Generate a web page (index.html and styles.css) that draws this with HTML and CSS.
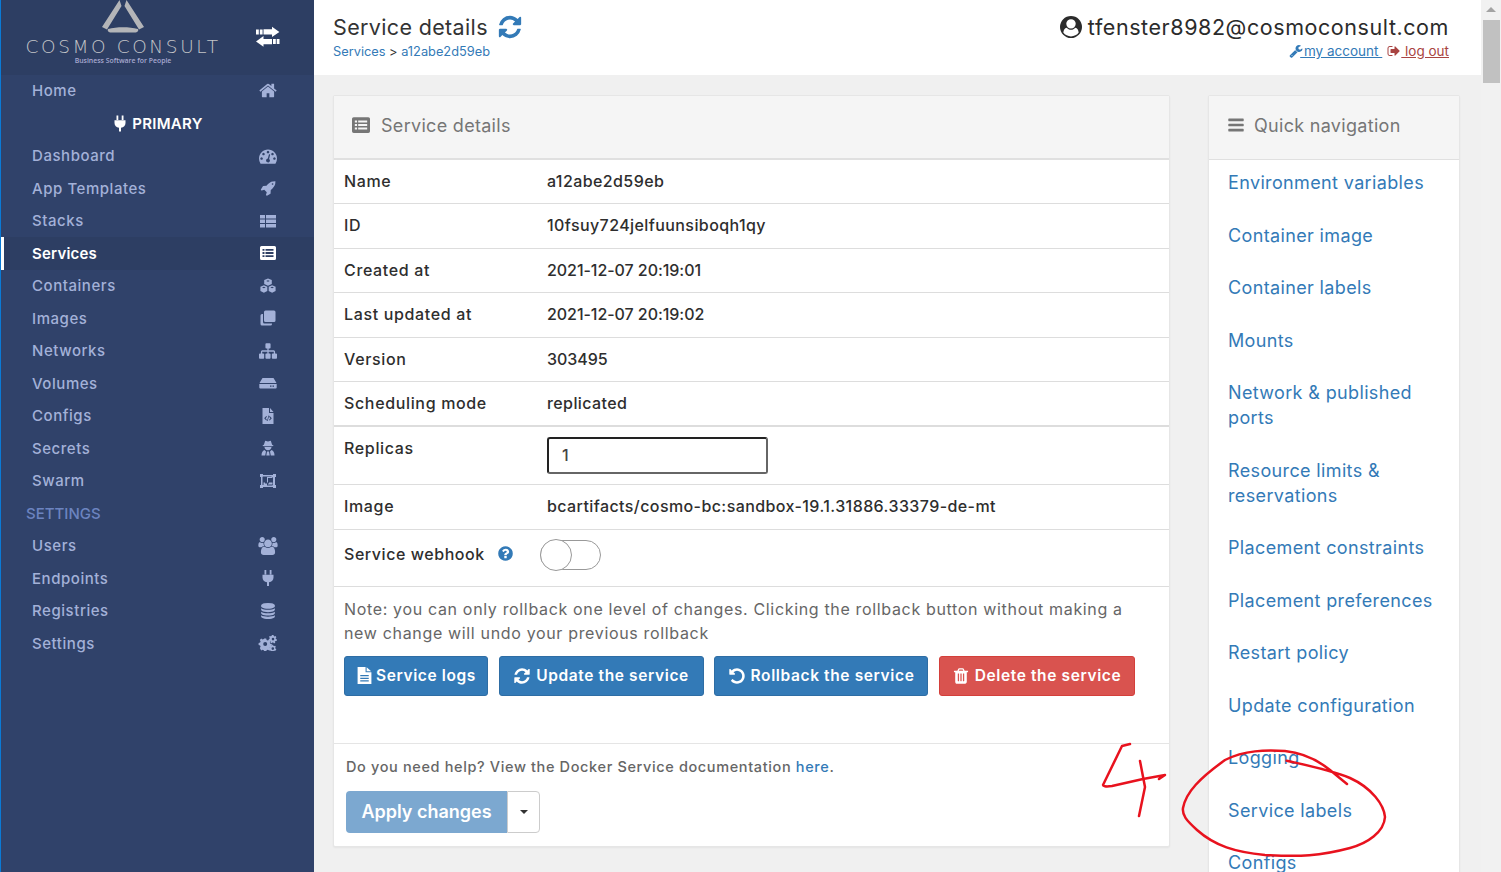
FILE: index.html
```html
<!DOCTYPE html>
<html lang="en">
<head>
<meta charset="utf-8">
<title>Service details</title>
<link rel="stylesheet" href="styles.css">
</head>
<body>
<svg class="sprite" xmlns="http://www.w3.org/2000/svg">
<symbol id="i-refresh" viewBox="0 0 1792 1792"><path d="M1639 1056q0 5-1 7-64 268-268 434.5t-478 166.5q-146 0-282.5-55t-243.5-157l-129 129q-19 19-45 19t-45-19-19-45v-448q0-26 19-45t45-19h448q26 0 45 19t19 45-19 45l-137 137q71 66 161 102t187 36q134 0 250-65t186-179q11-17 53-117 8-23 30-23h192q13 0 22.5 9.5t9.5 22.5zm25-800v448q0 26-19 45t-45 19h-448q-26 0-45-19t-19-45 19-45l138-138q-148-137-349-137-134 0-250 65t-186 179q-11 17-53 117-8 23-30 23h-199q-13 0-22.5-9.5t-9.5-22.5v-7q65-268 270-434.5t480-166.5q146 0 284 55.5t245 156.5l130-129q19-19 45-19t45 19 19 45z"/></symbol>
<symbol id="i-home" viewBox="0 0 1792 1792"><path d="M1472 992v480q0 26-19 45t-45 19h-384v-384h-256v384h-384q-26 0-45-19t-19-45v-480q0-1 .5-3t.5-3l575-474 575 474q1 2 1 6zm223-69l-62 74q-8 9-21 11h-3q-13 0-21-7l-692-577-692 577q-12 8-24 7-13-2-21-11l-62-74q-8-10-7-23.5t11-21.5l719-599q32-26 76-26t76 26l244 204v-195q0-14 9-23t23-9h192q14 0 23 9t9 23v408l219 182q10 8 11 21.5t-7 23.5z"/></symbol>
<symbol id="i-wrench" viewBox="0 0 1792 1792"><path d="M448 1472q0-26-19-45t-45-19-45 19-19 45 19 45 45 19 45-19 19-45zm644-420l-682 682q-37 37-90 37-52 0-91-37l-106-108q-38-36-38-90 0-53 38-91l681-681q39 98 114.5 173.5t173.5 114.5zm634-435q0 39-23 106-47 134-164.5 217.5t-258.5 83.5q-185 0-316.5-131.5t-131.5-316.5 131.5-316.5 316.5-131.5q58 0 121.5 16.5t107.5 46.5q16 11 16 28t-16 28l-293 169v224l193 107q5-3 79-48.5t135.5-81 70.5-35.5q15 0 23.5 10t8.5 25z"/></symbol>
<symbol id="i-signout" viewBox="0 0 1792 1792"><path d="M704 1440q0 4 1 20t.5 26.5-3 23.5-10 19.5-20.5 6.5h-320q-119 0-203.5-84.5t-84.5-203.5v-704q0-119 84.5-203.5t203.5-84.5h320q13 0 22.5 9.5t9.5 22.5q0 4 1 20t.5 26.5-3 23.5-10 19.5-20.5 6.5h-320q-66 0-113 47t-47 113v704q0 66 47 113t113 47h312l11.5 1 11.5 3 8 5.5 7 9 2 13.5zm928-544q0 26-19 45l-544 544q-19 19-45 19t-45-19-19-45v-288h-448q-26 0-45-19t-19-45v-384q0-26 19-45t45-19h448v-288q0-26 19-45t45-19 45 19l544 544q19 19 19 45z"/></symbol>
<symbol id="i-question" viewBox="0 0 1792 1792"><path d="M1024 1376v-192q0-14-9-23t-23-9h-192q-14 0-23 9t-9 23v192q0 14 9 23t23 9h192q14 0 23-9t9-23zm256-672q0-88-55.5-163t-138.5-116-170-41q-243 0-371 213-15 24 8 42l132 100q7 6 19 6 16 0 25-12 53-68 86-92 34-24 86-24 48 0 85.5 26t37.5 59q0 38-20 61t-68 45q-63 28-115.5 86.5t-52.5 125.5v36q0 14 9 23t23 9h192q14 0 23-9t9-23q0-19 21.5-49.5t54.5-49.5q32-18 49-28.5t46-35 44.5-48 28-60.5 12.5-81zm384 192q0 209-103 385.5t-279.5 279.5-385.5 103-385.5-103-279.5-279.5-103-385.5 103-385.5 279.5-279.5 385.5-103 385.5 103 279.5 279.5 103 385.5z"/></symbol>
<symbol id="i-bars" viewBox="0 0 1792 1792"><path d="M1664 1344v128q0 26-19 45t-45 19h-1408q-26 0-45-19t-19-45v-128q0-26 19-45t45-19h1408q26 0 45 19t19 45zm0-512v128q0 26-19 45t-45 19h-1408q-26 0-45-19t-19-45v-128q0-26 19-45t45-19h1408q26 0 45 19t19 45zm0-512v128q0 26-19 45t-45 19h-1408q-26 0-45-19t-19-45v-128q0-26 19-45t45-19h1408q26 0 45 19t19 45z"/></symbol>
<symbol id="i-undo" viewBox="0 0 1792 1792"><path d="M1664 896q0 156-61 298t-164 245-245 164-298 61q-172 0-327-72.5t-264-204.5q-7-10-6.5-22.5t8.5-20.5l137-138q10-9 25-9 16 2 23 12 73 95 179 147t225 52q104 0 198.5-40.5t163.5-109.5 109.5-163.5 40.5-198.5-40.5-198.5-109.5-163.5-163.5-109.5-198.5-40.5q-98 0-188 35.5t-160 101.5l137 138q31 30 14 69-17 40-59 40h-448q-26 0-45-19t-19-45v-448q0-42 40-59 39-17 69 14l130 129q107-101 244.5-156.5t284.5-55.5q156 0 298 61t245 164 164 245 61 298z"/></symbol>
<symbol id="i-trash" viewBox="0 0 1792 1792"><path d="M704 1376v-704q0-14-9-23t-23-9h-64q-14 0-23 9t-9 23v704q0 14 9 23t23 9h64q14 0 23-9t9-23zm256 0v-704q0-14-9-23t-23-9h-64q-14 0-23 9t-9 23v704q0 14 9 23t23 9h64q14 0 23-9t9-23zm256 0v-704q0-14-9-23t-23-9h-64q-14 0-23 9t-9 23v704q0 14 9 23t23 9h64q14 0 23-9t9-23zm-544-992h448l-48-117q-7-9-17-11h-317q-10 2-17 11zm928 32v64q0 14-9 23t-23 9h-96v948q0 83-47 143.5t-113 60.5h-832q-66 0-113-58.5t-47-141.5v-952h-96q-14 0-23-9t-9-23v-64q0-14 9-23t23-9h309l70-167q15-37 54-63t79-26h320q40 0 79 26t54 63l70 167h309q14 0 23 9t9 23z"/></symbol>
<symbol id="i-database" viewBox="0 0 1792 1792"><path d="M896 768q237 0 443-43t325-127v170q0 69-103 128t-280 93.5-385 34.5-385-34.5-280-93.5-103-128v-170q119 84 325 127t443 43zm0 768q237 0 443-43t325-127v170q0 69-103 128t-280 93.5-385 34.5-385-34.5-280-93.5-103-128v-170q119 84 325 127t443 43zm0-384q237 0 443-43t325-127v170q0 69-103 128t-280 93.5-385 34.5-385-34.5-280-93.5-103-128v-170q119 84 325 127t443 43zm0-1152q208 0 385 34.5t280 93.5 103 128v128q0 69-103 128t-280 93.5-385 34.5-385-34.5-280-93.5-103-128v-128q0-69 103-128t280-93.5 385-34.5z"/></symbol>
<symbol id="i-sitemap" viewBox="0 0 1792 1792"><path d="M1792 1248v320q0 40-28 68t-68 28h-320q-40 0-68-28t-28-68v-320q0-40 28-68t68-28h96v-192h-512v192h96q40 0 68 28t28 68v320q0 40-28 68t-68 28h-320q-40 0-68-28t-28-68v-320q0-40 28-68t68-28h96v-192h-512v192h96q40 0 68 28t28 68v320q0 40-28 68t-68 28h-320q-40 0-68-28t-28-68v-320q0-40 28-68t68-28h96v-192q0-52 38-90t90-38h512v-192h-96q-40 0-68-28t-28-68v-320q0-40 28-68t68-28h320q40 0 68 28t28 68v320q0 40-28 68t-68 28h-96v192h512q52 0 90 38t38 90v192h96q40 0 68 28t28 68z"/></symbol>
<symbol id="i-rocket" viewBox="0 0 1792 1792"><path d="M1504 448q0-40-28-68t-68-28-68 28-28 68 28 68 68 28 68-28 28-68zm224-288q0 249-75.5 430.5t-253.5 360.5q-81 80-195 176l-20 379q-2 16-16 26l-384 224q-7 4-16 4-12 0-23-9l-64-64q-13-14-8-32l85-276-281-281-276 85q-3 1-9 1-14 0-23-9l-64-64q-17-19-5-39l224-384q10-14 26-16l379-20q96-114 176-195 188-187 358-258t431-71q14 0 24 9.5t10 22.5z"/></symbol>
<symbol id="i-user" viewBox="0 0 1792 1792"><path d="M1523 1339q-22-155-87.5-257.5t-184.5-118.5q-67 74-159.5 115.5t-195.5 41.5-195.5-41.5-159.5-115.5q-119 16-184.5 118.5t-87.5 257.5q106 150 271 237.5t356 87.5 356-87.5 271-237.5zm-243-699q0-159-112.5-271.5t-271.5-112.5-271.5 112.5-112.5 271.5 112.5 271.5 271.5 112.5 271.5-112.5 112.5-271.5zm512 256q0 182-71 347.5t-190.5 286-285.5 191.5-349 71q-182 0-348-71t-286-191-191-286-71-348 71-348 191-286 286-191 348-71 348 71 286 191 191 286 71 348z"/></symbol>
<symbol id="i-users" viewBox="0 0 1920 1792"><path d="M593 896q-162 5-265 128h-134q-82 0-138-40.5t-56-118.5q0-353 124-353 6 0 43.5 21t97.5 42.5 119 21.5q67 0 133-23-5 37-5 66 0 139 81 256zm1071 637q0 120-73 189.5t-194 69.5h-874q-121 0-194-69.5t-73-189.5q0-53 3.5-103.5t14-109 26.5-108.5 43-97.5 62-81 85.5-53.5 111.5-20q10 0 43 21.5t73 48 107 48 135 21.5 135-21.5 107-48 73-48 43-21.5q61 0 111.5 20t85.5 53.5 62 81 43 97.5 26.5 108.5 14 109 3.5 103.5zm-1024-1277q0 106-75 181t-181 75-181-75-75-181 75-181 181-75 181 75 75 181zm704 384q0 159-112.5 271.5t-271.5 112.5-271.5-112.5-112.5-271.5 112.5-271.5 271.5-112.5 271.5 112.5 112.5 271.5zm576 225q0 78-56 118.5t-138 40.5h-134q-103-123-265-128 81-117 81-256 0-29-5-66 66 23 133 23 59 0 119-21.5t97.5-42.5 43.5-21q124 0 124 353zm-128-609q0 106-75 181t-181 75-181-75-75-181 75-181 181-75 181 75 75 181z"/></symbol>
<symbol id="i-gauge" viewBox="0 0 1792 1792"><path d="M384 1152q0-53-37.5-90.5t-90.5-37.5-90.5 37.5-37.5 90.5 37.5 90.5 90.5 37.5 90.5-37.5 37.5-90.5zm192-448q0-53-37.5-90.5t-90.5-37.5-90.5 37.5-37.5 90.5 37.5 90.5 90.5 37.5 90.5-37.5 37.5-90.5zm428 481l101-382q6-26-7.5-48.5t-38.5-29.5-48 6.5-30 39.5l-101 382q-60 5-107 43.5t-63 98.5q-20 77 20 146t117 89 146-20 89-117q16-60-6-117t-72-91zm660-33q0-53-37.5-90.5t-90.5-37.5-90.5 37.5-37.5 90.5 37.5 90.5 90.5 37.5 90.5-37.5 37.5-90.5zm-640-640q0-53-37.5-90.5t-90.5-37.5-90.5 37.5-37.5 90.5 37.5 90.5 90.5 37.5 90.5-37.5 37.5-90.5zm448 192q0-53-37.5-90.5t-90.5-37.5-90.5 37.5-37.5 90.5 37.5 90.5 90.5 37.5 90.5-37.5 37.5-90.5zm320 448q0 261-141 483-19 29-54 29h-1402q-35 0-54-29-141-221-141-483 0-182 71-348t191-286 286-191 348-71 348 71 286 191 191 286 71 348z"/></symbol>
<symbol id="i-exchange" viewBox="0 0 24 21"><path d="M16 0.700L23.400 6 16 11V8.500H7.500V3.300H16zM0 3.500h2.800v5H0zM3.800 3.500h2.800v5H3.800zM7.500 10L0 15.400 7.500 20.800V18.200H16V13H7.500zM17 13h2.800v5H17zM20.700 13h2.800v5h-2.800z"/></symbol>
<symbol id="i-thlist" viewBox="0 0 16 16"><path d="M0 2h5v3.500H0zM6 2h10v3.500H6zM0 6.500h5V10H0zM6 6.500h10V10H6zM0 11h5v3.500H0zM6 11h10v3.500H6z"/></symbol>
<symbol id="i-listalt" viewBox="0 0 16 16"><path fill-rule="evenodd" d="M1.500 1h13A1.500 1.500 0 0 1 16 2.500v11a1.500 1.500 0 0 1-1.500 1.500h-13A1.500 1.500 0 0 1 0 13.500v-11A1.500 1.500 0 0 1 1.500 1zM2.500 4v1.800h2V4zM5.500 4v1.800h8V4zM2.500 7.100v1.800h2V7.100zM5.500 7.100v1.800h8V7.100zM2.500 10.200V12h2v-1.800zM5.500 10.200V12h8v-1.800z"/></symbol>
<symbol id="i-plug" viewBox="0 0 16 16"><path d="M4.500 0h1.800v4.500H4.500zM9.700 0h1.800v4.500H9.700zM2.500 4.800h11v2.600c0 2.600-1.800 4.400-4.500 4.800V16H7v-3.800C4.300 11.800 2.500 10 2.500 7.400z"/></symbol>
<symbol id="i-cubes" viewBox="0 0 16 16"><path fill-rule="evenodd" d="M8 .5l3.800 1.600v4L8 7.700 4.200 6.100v-4zM6.200 3l1.800.8 1.800-.8L8 2.200zM3.900 7.300l3.400 1.500v4.100l-3.400 1.800L.4 13v-4.200zM2 9.500l1.900.8 1.800-.8-1.800-.7zM12.100 7.300l3.500 1.500V13l-3.500 1.700-3.400-1.800V8.800zM10.300 9.500l1.800.8 1.900-.8-1.900-.7z"/></symbol>
<symbol id="i-clone" viewBox="0 0 16 16"><path d="M5.500 0.500h8.500a1.500 1.500 0 0 1 1.500 1.500v8.500a1.500 1.500 0 0 1-1.500 1.500H5.500A1.500 1.500 0 0 1 4 10.500V2a1.500 1.500 0 0 1 1.500-1.500z"/><path d="M3 4v8a1.500 1.500 0 0 0 1.500 1.500H12V14a1.500 1.500 0 0 1-1.500 1.500H2A1.500 1.500 0 0 1 .5 14V5.500A1.500 1.500 0 0 1 2 4z"/></symbol>
<symbol id="i-hdd" viewBox="0 0 18 14"><path fill-rule="evenodd" d="M3.500 2h11l3 5H.5zM.3 8h17.400v3.500a1 1 0 0 1-1 1H1.300a1 1 0 0 1-1-1zM11 9.500v1.300h1.500V9.500zM13.500 9.500v1.300H15V9.500z"/></symbol>
<symbol id="i-filecode" viewBox="0 0 16 16"><path fill-rule="evenodd" d="M2.500 0H9v5h4.500v11h-11zM10 0l3.500 4H10zM6.300 8L4.200 10.300l2.100 2.300.7-.7-1.400-1.600L7 8.700zM9.700 8L9 8.700l1.400 1.600L9 11.900l.7.7 2.100-2.300zM8.500 7.500L7 13h.7l1.500-5.500z"/></symbol>
<symbol id="i-secret" viewBox="0 0 16 16"><path fill-rule="evenodd" d="M5.200.8L8 1.600 10.800.8l1.300 4 1.600.8-1.500.7H3.800L2.300 5.600l1.600-.8zM4.500 7h7c0 1.800-1.500 3.300-3.500 3.300S4.500 8.800 4.500 7zM1.500 15.500c0-3 1-4.800 3-5.500l1.500 1.500-.8 4zM14.500 15.500c0-3-1-4.800-3-5.500L10 11.500l.8 4zM7 11.500h2l.7 4H6.300z"/></symbol>
<symbol id="i-ungroup" viewBox="0 0 16 16"><path fill-rule="evenodd" d="M0 1h3v1h10V1h3v3h-1v8h1v3h-3v-1H3v1H0v-3h1V4H0zM3 3.500L2.500 4v8h1V9.500H7V4h4.500v-.5zM8 5v4.500H5v1h2v2h5.500V12H13V4h-.5v1zM9 10.500v-1h3.500v2H8v-1z"/></symbol>
<symbol id="i-cogs" viewBox="0 0 18 16"><path fill-rule="evenodd" d="M5.200 3.500h2l.4 1.500 1.200.5 1.400-.8 1.400 1.400-.8 1.400.5 1.200 1.500.4v2l-1.500.4-.5 1.200.8 1.400-1.400 1.400-1.400-.8-1.200.5-.4 1.500h-2l-.4-1.500-1.200-.5-1.400.8L.8 13.100l.8-1.400-.5-1.200L-.4 10V8l1.500-.4.500-1.200-.8-1.400 1.400-1.400 1.400.8 1.200-.5zM6.200 7a2 2 0 1 0 0 4 2 2 0 0 0 0-4z"/><path fill-rule="evenodd" d="M14.500 0l.3 1 .9.4.9-.4.8 1.200-.7.7.1 1L18 4.500 17.600 6l-1.100-.1-.6.8.4 1-1.300.7-.7-.8-1-.1-.7.8-1.300-.7.4-1-.6-.8-1.100.1-.4-1.500 1-.6.1-1-.7-.7.8-1.200.9.4.9-.4.3-1zM14 2.800a1.300 1.300 0 1 0 0 2.600 1.300 1.300 0 0 0 0-2.600z"/><path fill-rule="evenodd" d="M14 9.800l.3 1 .9.3.9-.4.8 1.200-.7.7.1 1 1 .5-.4 1.500-1.100-.1-.6.8.1.6H12l.1-.6-.6-.8-1.100.1-.4-1.500 1-.5.1-1-.7-.7.8-1.200.9.4.9-.3.3-1zM13.800 12.300a1.300 1.300 0 1 0 0 2.600 1.300 1.300 0 0 0 0-2.600z"/></symbol>
<symbol id="i-filetext" viewBox="0 0 16 16"><path fill-rule="evenodd" d="M1.500 0H9v5h5.500v11h-13zM4 7.500v1.200h8V7.500zM4 10v1.200h8V10zM4 12.500v1.200h8v-1.200zM10 .2L14.300 4H10z"/></symbol>
</svg>

<div class="app">
  <aside class="sidebar">
    <div class="brand">
      <div class="logo">
        <svg class="logo-mark" viewBox="0 0 44 34"><path d="M18.500 0L1 27l5 2.500L20.500 6zM25.500 0L43 27l-5 2.500L23.500 6zM7 29c9-2.500 21-2.500 30 0 1 2-1 3.500-3 3.500H10c-2 0-4-1.500-3-3.500z"/></svg>
        <div class="logo-name">COSMO CONSULT</div>
        <div class="logo-tag">Business Software for People</div>
      </div>
      <svg class="swap"><use href="#i-exchange"/></svg>
    </div>
    <nav class="nav">
      <a class="nav-item"><span>Home</span><svg class="nav-ic xl"><use href="#i-home"/></svg></a>
      <div class="nav-endpoint"><svg class="ep-ic"><use href="#i-plug"/></svg>PRIMARY</div>
      <a class="nav-item"><span>Dashboard</span><svg class="nav-ic lg"><use href="#i-gauge"/></svg></a>
      <a class="nav-item"><span>App Templates</span><svg class="nav-ic"><use href="#i-rocket"/></svg></a>
      <a class="nav-item"><span>Stacks</span><svg class="nav-ic"><use href="#i-thlist"/></svg></a>
      <a class="nav-item active"><span>Services</span><svg class="nav-ic"><use href="#i-listalt"/></svg></a>
      <a class="nav-item"><span>Containers</span><svg class="nav-ic"><use href="#i-cubes"/></svg></a>
      <a class="nav-item"><span>Images</span><svg class="nav-ic"><use href="#i-clone"/></svg></a>
      <a class="nav-item"><span>Networks</span><svg class="nav-ic lg"><use href="#i-sitemap"/></svg></a>
      <a class="nav-item"><span>Volumes</span><svg class="nav-ic sm"><use href="#i-hdd"/></svg></a>
      <a class="nav-item"><span>Configs</span><svg class="nav-ic"><use href="#i-filecode"/></svg></a>
      <a class="nav-item"><span>Secrets</span><svg class="nav-ic"><use href="#i-secret"/></svg></a>
      <a class="nav-item"><span>Swarm</span><svg class="nav-ic"><use href="#i-ungroup"/></svg></a>
      <div class="nav-title">SETTINGS</div>
      <a class="nav-item"><span>Users</span><svg class="nav-ic lg"><use href="#i-users"/></svg></a>
      <a class="nav-item"><span>Endpoints</span><svg class="nav-ic"><use href="#i-plug"/></svg></a>
      <a class="nav-item"><span>Registries</span><svg class="nav-ic"><use href="#i-database"/></svg></a>
      <a class="nav-item"><span>Settings</span><svg class="nav-ic"><use href="#i-cogs"/></svg></a>
    </nav>
  </aside>

  <main class="main">
    <header class="topbar">
      <div>
        <div class="page-title">Service details <svg class="title-refresh"><use href="#i-refresh"/></svg></div>
        <div class="crumbs"><a>Services</a> &gt; <a>a12abe2d59eb</a></div>
      </div>
      <div class="account">
        <div class="account-name"><svg class="account-ic"><use href="#i-user"/></svg>tfenster8982@cosmoconsult.com</div>
        <div class="account-links">
          <svg class="link-ic blue"><use href="#i-wrench"/></svg><a class="lnk">&nbsp;my account&nbsp;</a>
          <svg class="link-ic red gap"><use href="#i-signout"/></svg><a class="lnk out">&nbsp;log out</a>
        </div>
      </div>
    </header>

    <div class="content">
      <section class="panel details">
        <div class="panel-head"><svg class="head-ic"><use href="#i-listalt"/></svg>Service details</div>
        <div class="row"><div class="lab">Name</div><div>a12abe2d59eb</div></div>
        <div class="row"><div class="lab">ID</div><div>10fsuy724jelfuunsiboqh1qy</div></div>
        <div class="row"><div class="lab">Created at</div><div class="num">2021-12-07 20:19:01</div></div>
        <div class="row"><div class="lab">Last updated at</div><div class="num">2021-12-07 20:19:02</div></div>
        <div class="row"><div class="lab">Version</div><div class="num">303495</div></div>
        <div class="row strong"><div class="lab">Scheduling mode</div><div>replicated</div></div>
        <div class="row replicas"><div class="lab">Replicas</div><div class="replica-box">1</div></div>
        <div class="row"><div class="lab">Image</div><div>bcartifacts/cosmo-bc:sandbox-19.1.31886.33379-de-mt</div></div>
        <div class="row webhook"><div class="lab">Service webhook <svg class="help-ic"><use href="#i-question"/></svg></div><div class="switch"><span class="knob"></span></div></div>
        <div class="actions">
          <p class="note">Note: you can only rollback one level of changes. Clicking the rollback button without making a new change will undo your previous rollback</p>
          <div class="btns">
            <a class="btn primary w1"><svg class="btn-ic file"><use href="#i-filetext"/></svg>Service logs</a>
            <a class="btn primary w2"><svg class="btn-ic"><use href="#i-refresh"/></svg>Update the service</a>
            <a class="btn primary w3"><svg class="btn-ic"><use href="#i-undo"/></svg>Rollback the service</a>
            <a class="btn danger w4"><svg class="btn-ic"><use href="#i-trash"/></svg>Delete the service</a>
          </div>
        </div>
        <div class="foot">
          <p class="help">Do you need help? View the Docker Service documentation <a>here</a>.</p>
          <div class="apply"><span class="apply-main">Apply changes</span><span class="apply-caret"></span></div>
        </div>
      </section>

      <section class="panel quick">
        <div class="panel-head"><svg class="head-ic bars"><use href="#i-bars"/></svg>Quick navigation</div>
        <div class="quick-links">
          <a>Environment variables</a>
          <a>Container image</a>
          <a>Container labels</a>
          <a>Mounts</a>
          <a>Network &amp; published ports</a>
          <a>Resource limits &amp; reservations</a>
          <a>Placement constraints</a>
          <a>Placement preferences</a>
          <a>Restart policy</a>
          <a>Update configuration</a>
          <a>Logging</a>
          <a>Service labels</a>
          <a>Configs</a>
        </div>
      </section>
    </div>
  </main>

  <div class="scrollbar">
    <span class="sb-arrow"></span>
    <span class="sb-thumb"></span>
  </div>
</div>

<svg class="scribble" viewBox="0 0 1501 872" xmlns="http://www.w3.org/2000/svg">
  <path d="M1286.700 760.700C1310 766 1330 770 1350 778C1372 788 1384 805 1385 817C1384 832 1368 843 1350 848C1320 856 1300 857 1265 855C1235 852 1215 846 1197 830C1186 820 1182 815 1183 808C1186 792 1200 778 1225 760C1245 750 1265 750 1285 751C1305 753 1320 762 1330 770C1336 775 1342 780 1347 784"/>
  <path d="M1130 744L1122 746L1103 785C1103 786 1105 787 1112 786L1143 779L1165 775L1159 779"/>
  <path d="M1140 761L1145 787L1139 816"/>
</svg>
</body>
</html>
```
FILE: styles.css
```css
* { box-sizing: border-box; }
html, body { margin: 0; padding: 0; height: 100%; overflow: hidden; }
body {
  font-family: Inter, "Noto Sans", "Liberation Sans", sans-serif;
  font-size: 16px;
  color: #333;
  background: #f0f0f0;
}
a { color: #337ab7; text-decoration: none; }
svg { fill: currentColor; }
.sprite { position: absolute; width: 0; height: 0; }

.app { display: flex; height: 872px; overflow: hidden; }

/* sidebar */
.sidebar {
  width: 314px;
  flex: none;
  background: #30426a;
  border-left: 1px solid #0a7ad6;
  color: #a3b1d8;
}
.brand {
  height: 75px;
  background: #2d3e63;
  display: flex;
  align-items: center;
  padding-left: 24px;
}
.logo { width: 196px; display: flex; flex-direction: column; align-items: center; height: 75px; overflow: hidden; }
.logo-mark { width: 44px; height: 34px; fill: #b4b5b8; flex: none; }
.logo-name { font-family: "DejaVu Sans", sans-serif; font-weight: 200; font-size: 18.500px; line-height: 20px; color: #c4c5c8; letter-spacing: 2.600px; margin-top: 3px; white-space: nowrap; }
.logo-tag { font-family: "Open Sans", sans-serif; font-size: 6.900px; line-height: 8px; color: #a7a9d0; font-weight: 600; white-space: nowrap; }
.swap { width: 24px; height: 21px; color: #fff; margin: 0 0 0 35px; transform: translateY(-1px); }
.nav { display: flex; flex-direction: column; margin-top: -.4px; }
.nav-item {
  height: 32.500px;
  display: flex;
  align-items: center;
  justify-content: space-between;
  padding: 0 36px 0 31px;
  color: #a3b1d8;
  font-weight: 500;
  font-size: 15px;
  letter-spacing: .55px;
}
.nav-item.active {
  background: #2d3e63;
  color: #fff;
  font-weight: 600;
  letter-spacing: .2px;
  box-shadow: inset 3px 0 0 #fff;
}
.nav-ic { width: 20px; height: 16px; }
.nav-ic.lg { height: 18px; }
.nav-ic.xl { height: 19px; }
.nav-ic.sm { height: 14px; }
.nav-endpoint {
  height: 32.500px;
  display: flex;
  align-items: center;
  justify-content: center;
  color: #fff;
  font-weight: 600;
  font-size: 15px;
  letter-spacing: .3px;
  padding-right: 0;
}
.ep-ic { width: 16px; height: 17px; margin-right: 4px; }
.nav-title {
  height: 32.500px;
  display: flex;
  align-items: center;
  padding-left: 25px;
  color: #6c84c0;
  font-weight: 500;
  font-size: 15px;
}

/* main */
.main { flex: 1; min-width: 0; display: flex; flex-direction: column; }
.topbar {
  height: 75px;
  flex: none;
  background: #fff;
  display: flex;
  justify-content: space-between;
  padding: 13px 32px 0 19px;
}
.page-title { font-size: 21.500px; line-height: 28px; color: #333; letter-spacing: .35px; display: flex; align-items: center; }
.title-refresh { width: 26px; height: 26px; color: #337ab7; margin-left: 9px; }
.crumbs { font-size: 12.800px; line-height: 18px; margin-top: 2px; }
.account { display: flex; flex-direction: column; align-items: flex-end; }
.account-name { font-size: 21.500px; line-height: 28px; letter-spacing: .57px; display: flex; align-items: center; color: #2b2b2b; }
.account-ic { width: 22px; height: 22px; margin-right: 6px; }
.account-links { font-size: 13.500px; line-height: 18px; margin-top: 1px; display: flex; align-items: center; }
.lnk { text-decoration: underline; }
.lnk.out { color: #a94442; }
.link-ic { width: 14px; height: 14px; }
.link-ic.blue { color: #337ab7; margin-right: -3px; }
.link-ic.red { color: #a94442; }
.link-ic.gap { margin-left: 5px; }

.content { flex: 1; min-height: 0; display: flex; align-items: flex-start; gap: 38px; padding: 20px 21px 0 19px; }
.panel {
  background: #fff;
  border: 1px solid #e6e6e6;
  box-shadow: 0 1px 2px rgba(0,0,0,.05);
  border-radius: 2px;
}
.details { width: 837px; flex: none; height: 752px; }
.quick { flex: 1; height: 900px; }
.panel-head {
  height: 63.500px;
  background: #f5f5f5;
  display: flex;
  align-items: center;
  padding: 0 0 3px 18px;
  color: #767676;
  font-size: 18px;
  letter-spacing: .3px;
  border-bottom: 2px solid #e0e0e0;
}
.quick .panel-head { border-bottom-width: 1px; padding-bottom: 4px; }
.head-ic { width: 18px; height: 18px; margin-right: 11px; }
.head-ic.bars { margin-right: 9px; }

.row {
  display: grid;
  grid-template-columns: 203px 1fr;
  align-items: center;
  height: 44.500px;
  padding: 0 0 1px 10px;
  border-bottom: 1px solid #ddd;
  color: #2e2e2e;
  font-size: 16px;
  letter-spacing: .41px;
  font-weight: 500;
}
.row .lab { letter-spacing: .65px; }
.row .num { letter-spacing: -.05px; }
.row.strong { border-bottom-width: 2px; }
.row.replicas { height: 58.500px; align-items: start; padding-top: 10px; }
.row.replicas .lab { margin-top: 1px; }
.replica-box {
  width: 221px;
  height: 37px;
  border: 2px solid #222;
  border-right-color: #666;
  border-bottom-color: #666;
  border-radius: 3px;
  padding-left: 13px;
  display: flex;
  align-items: center;
  color: #444;
}
.row.webhook { height: 57px; padding-bottom: 6px; }
.row.webhook .lab { margin-top: -1px; letter-spacing: .55px; }
.help-ic { width: 17px; height: 17px; color: #337ab7; margin-left: 7px; vertical-align: -2px; }
.switch {
  width: 61px;
  height: 30px;
  margin-left: -7px;
  border: 1px solid #999;
  border-radius: 15px;
  background: #fff;
  display: flex;
  align-items: center;
}
.knob {
  width: 32px;
  height: 32px;
  margin-left: -1px;
  flex: none;
  border: 1px solid #999;
  border-radius: 50%;
  background: #fff;
}
.actions { height: 157px; padding: 10px 10px 0; border-bottom: 1px solid #e5e5e5; }
.note { margin: 0; font-size: 16px; line-height: 24px; color: #666; letter-spacing: .66px; width: 800px; }
.btns { display: flex; gap: 10.500px; margin-top: 11px; }
.btn {
  height: 40px;
  display: flex;
  align-items: center;
  justify-content: center;
  border-radius: 3px;
  color: #fff;
  font-weight: 600;
  font-size: 15.500px;
  letter-spacing: .62px;
}
.btn.primary { background: #337ab7; border: 1px solid #2e6da4; }
.btn.danger { background: #d9534f; border: 1px solid #d43f3a; }
.w1 { width: 144px; }
.w2 { width: 205px; }
.w3 { width: 214px; }
.w4 { width: 196px; }
.btn-ic { width: 18px; height: 18px; margin-right: 5px; }
.btn-ic.file { width: 17px; height: 17px; margin-right: 3px; }
.foot { padding: 0 12px; }
.help { margin: 13px 0 0; font-size: 14.500px; line-height: 20px; color: #666; letter-spacing: .63px; font-weight: 500; }
.apply { display: flex; margin-top: 14px; height: 42px; width: 194px; }
.apply-main {
  width: 161px;
  background: #7ca8d0;
  color: #fff;
  border-radius: 4px 0 0 4px;
  display: flex;
  align-items: center;
  justify-content: center;
  font-size: 18px;
  font-weight: 600;
}
.apply-caret {
  width: 33px;
  background: #fff;
  border: 1px solid #ccc;
  border-radius: 0 4px 4px 0;
  display: flex;
  align-items: center;
  justify-content: center;
}
.apply-caret::after {
  content: "";
  border-left: 4.500px solid transparent;
  border-right: 4.500px solid transparent;
  border-top: 4.500px solid #333;
}
.quick-links { display: flex; flex-direction: column; gap: 27.500px; padding: 10.500px 19px 0; }
.quick-links a { font-size: 18px; line-height: 25px; color: #337ab7; letter-spacing: .36px; }

/* scrollbar */
.scrollbar { width: 20px; flex: none; background: #f1f1f1; display: flex; flex-direction: column; align-items: center; }
.sb-arrow { margin-top: 7px; border-left: 5px solid transparent; border-right: 5px solid transparent; border-bottom: 5px solid #a3a3a3; }
.sb-thumb { width: 17px; height: 63px; margin-top: 8px; background: #c1c1c1; }

/* hand-drawn annotation over the page */
.scribble { position: absolute; left: 0; top: 0; width: 1501px; height: 872px; fill: none; pointer-events: none; }
.scribble path { fill: none; stroke: #e8121e; stroke-width: 2.500; stroke-linecap: round; stroke-linejoin: round; }
```
